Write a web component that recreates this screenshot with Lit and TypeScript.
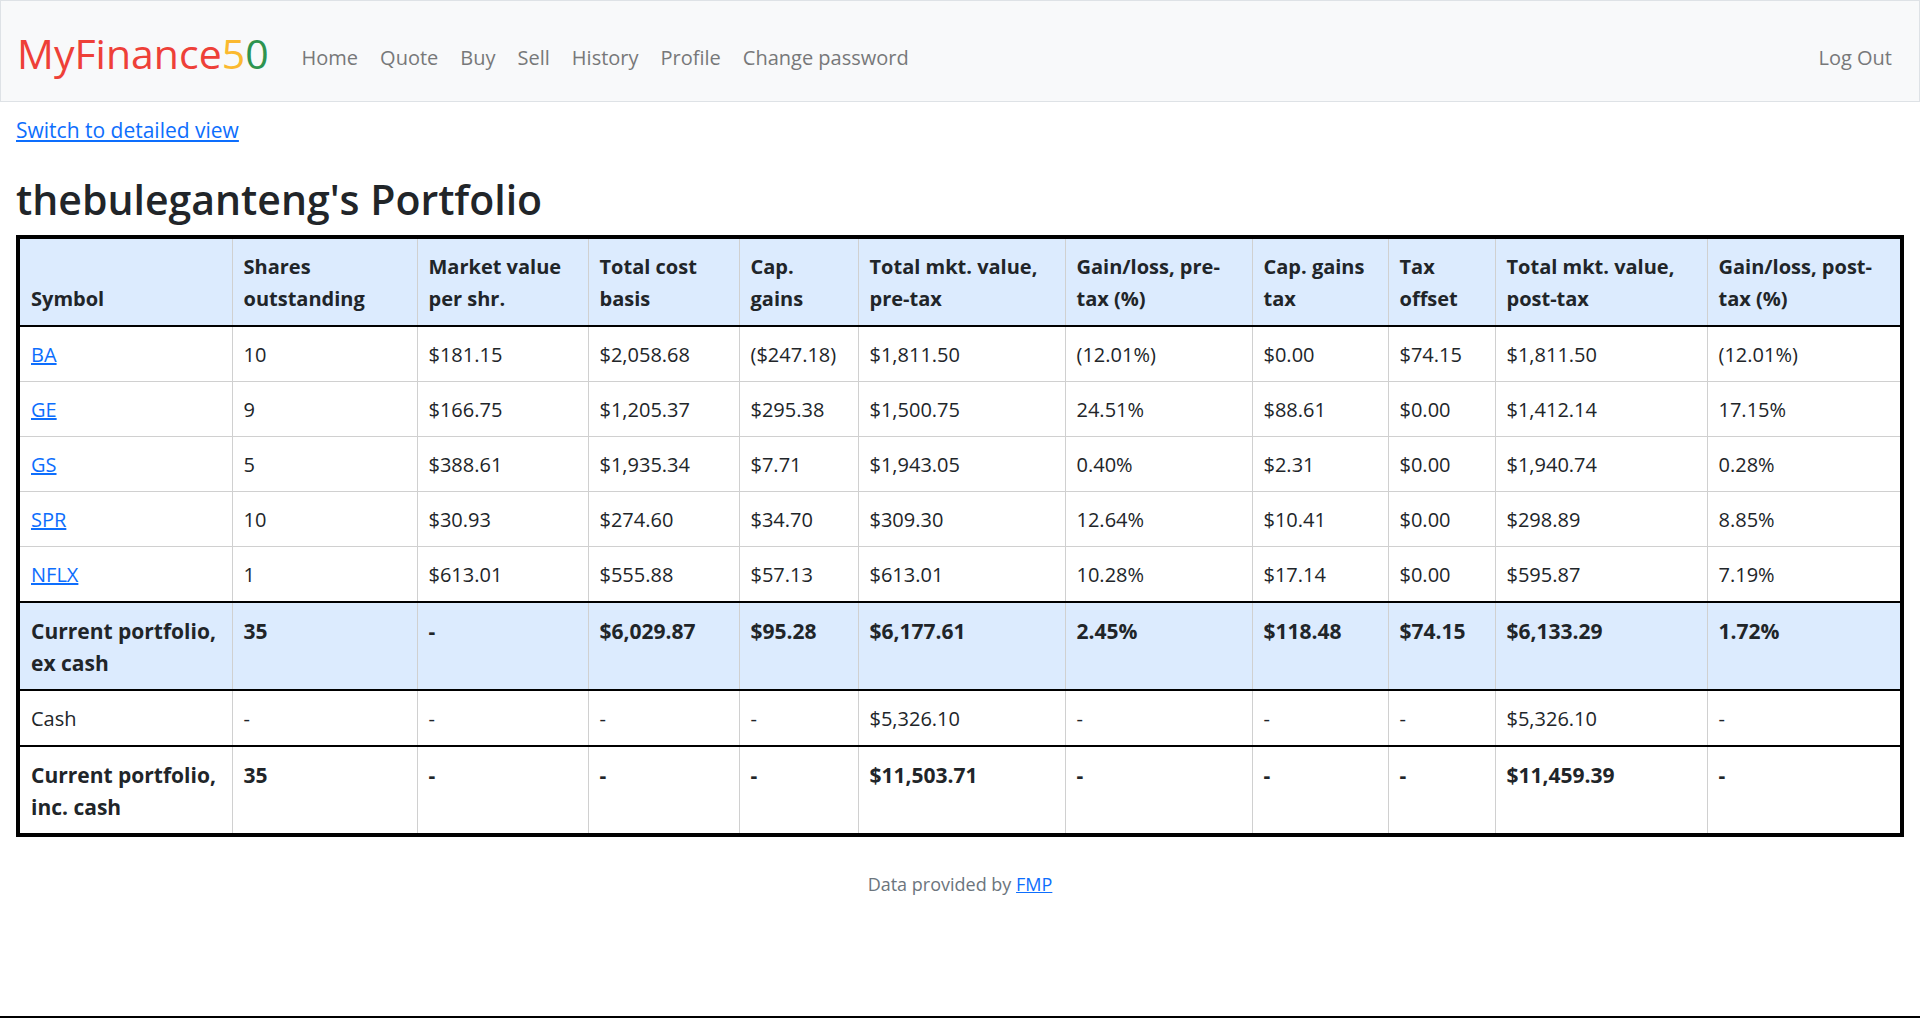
import { LitElement, html, css } from "lit";
import { customElement } from "lit/decorators.js";
import { classMap } from "lit/directives/class-map.js";

interface Row {
  kind: "holding" | "subtotal" | "cash" | "total";
  name: string;
  values: string[];
}

const NAV = ["Home", "Quote", "Buy", "Sell", "History", "Profile", "Change password"];

const COLUMNS = [
  { id: "symbol", label: "Symbol" },
  { id: "shares", label: "Shares outstanding" },
  { id: "price", label: "Market value per shr." },
  { id: "cost", label: "Total cost basis" },
  { id: "gains", label: "Cap. gains" },
  { id: "pre-value", label: "Total mkt. value, pre-tax" },
  { id: "pre-return", label: "Gain/loss, pre-tax (%)" },
  { id: "tax", label: "Cap. gains tax" },
  { id: "offset", label: "Tax offset" },
  { id: "post-value", label: "Total mkt. value, post-tax" },
  { id: "post-return", label: "Gain/loss, post-tax (%)" },
];

const ROWS: Row[] = [
  { kind: "holding", name: "BA", values: ["10", "$181.15", "$2,058.68", "($247.18)", "$1,811.50", "(12.01%)", "$0.00", "$74.15", "$1,811.50", "(12.01%)"] },
  { kind: "holding", name: "GE", values: ["9", "$166.75", "$1,205.37", "$295.38", "$1,500.75", "24.51%", "$88.61", "$0.00", "$1,412.14", "17.15%"] },
  { kind: "holding", name: "GS", values: ["5", "$388.61", "$1,935.34", "$7.71", "$1,943.05", "0.40%", "$2.31", "$0.00", "$1,940.74", "0.28%"] },
  { kind: "holding", name: "SPR", values: ["10", "$30.93", "$274.60", "$34.70", "$309.30", "12.64%", "$10.41", "$0.00", "$298.89", "8.85%"] },
  { kind: "holding", name: "NFLX", values: ["1", "$613.01", "$555.88", "$57.13", "$613.01", "10.28%", "$17.14", "$0.00", "$595.87", "7.19%"] },
  { kind: "subtotal", name: "Current portfolio, ex cash", values: ["35", "-", "$6,029.87", "$95.28", "$6,177.61", "2.45%", "$118.48", "$74.15", "$6,133.29", "1.72%"] },
  { kind: "cash", name: "Cash", values: ["-", "-", "-", "-", "$5,326.10", "-", "-", "-", "$5,326.10", "-"] },
  { kind: "total", name: "Current portfolio, inc. cash", values: ["35", "-", "-", "-", "$11,503.71", "-", "-", "-", "$11,459.39", "-"] },
];

@customElement("site-nav")
export class SiteNav extends LitElement {
  static styles = css`
    :host {
      display: block;
    }
    .bar {
      display: flex;
      align-items: center;
      padding: 14px 16px 8px;
      border: 1px solid #dee2e6;
      background: #f8f9fa;
    }
    .brand {
      margin-right: 22px;
      padding-bottom: 2px;
      font-size: 41px;
      line-height: 76px;
      text-decoration: none;
      white-space: nowrap;
    }
    .red {
      color: #ee4038;
    }
    .yellow {
      color: #fbb92f;
    }
    .green {
      color: #2e944f;
    }
    .links {
      display: flex;
      flex: 1;
      margin: 0;
      padding: 0;
      list-style: none;
    }
    .link {
      display: block;
      padding: 15px 11px 7px;
      color: #777879;
      text-decoration: none;
      white-space: nowrap;
    }
    .end {
      margin-left: auto;
    }
  `;

  render() {
    return html`
      <nav class="bar" aria-label="Main">
        <a class="brand" href="#"><span class="red">MyFinance</span><span class="yellow">5</span><span class="green">0</span></a>
        <ul class="links">
          ${NAV.map((label) => html`<li><a class="link" href="#">${label}</a></li>`)}
          <li class="end"><a class="link" href="#">Log Out</a></li>
        </ul>
      </nav>
    `;
  }
}

@customElement("portfolio-table")
export class PortfolioTable extends LitElement {
  static styles = css`
    :host {
      display: block;
    }
    .table {
      width: 100%;
      table-layout: fixed;
      border: 4px solid #000;
      border-collapse: collapse;
    }
    .symbol { width: 214px; }
    .shares { width: 185px; }
    .price { width: 171px; }
    .cost { width: 151px; }
    .gains { width: 119px; }
    .pre-value { width: 207px; }
    .pre-return { width: 187px; }
    .tax { width: 136px; }
    .offset { width: 107px; }
    .post-value { width: 212px; }
    .post-return { width: 195px; }
    .cell {
      padding: 12px 11px 10px;
      border: 1px solid #d0d0d0;
      font-weight: inherit;
      text-align: left;
      vertical-align: top;
    }
    .head .cell {
      vertical-align: bottom;
    }
    .head,
    .subtotal {
      background: #dcebfe;
    }
    .head,
    .subtotal,
    .total {
      font-weight: 700;
    }
    .subtotal,
    .total {
      font-size: 21px;
    }
    .head,
    .subtotal,
    .cash {
      border-bottom: 2px solid #000;
    }
    .subtotal {
      border-top: 2px solid #000;
    }
    .link {
      color: #0d6efd;
    }
  `;

  private row(row: Row) {
    return html`
      <tr class=${classMap({ [row.kind]: true })}>
        <th class="cell" scope="row">${row.kind === "holding" ? html`<a class="link" href="#">${row.name}</a>` : row.name}</th>
        ${row.values.map((value) => html`<td class="cell">${value}</td>`)}
      </tr>
    `;
  }

  render() {
    return html`
      <table class="table">
        <colgroup>
          ${COLUMNS.map((column) => html`<col class=${column.id} />`)}
        </colgroup>
        <thead>
          <tr class="head">
            ${COLUMNS.map((column) => html`<th class="cell" scope="col">${column.label}</th>`)}
          </tr>
        </thead>
        <tbody>
          ${ROWS.map((row) => this.row(row))}
        </tbody>
      </table>
    `;
  }
}

@customElement("app-root")
export class AppRoot extends LitElement {
  static styles = css`
    :host {
      display: flex;
      flex-direction: column;
      box-sizing: border-box;
      min-height: 100vh;
      border-bottom: 2px solid #000;
      background: #fff;
      color: #212529;
      font-family: "Segoe UI", "Open Sans", "Noto Sans", sans-serif;
      font-size: 20px;
      line-height: 32px;
    }
    .main {
      padding: 12px 16px 0;
    }
    .link {
      color: #0d6efd;
    }
    .switch {
      font-size: 21px;
    }
    .title {
      margin: 26px 0 10px;
      font-size: 41px;
      font-weight: 600;
      line-height: 52px;
    }
    .foot {
      padding: 31px 16px;
      color: #6c757d;
      font-size: 18px;
      text-align: center;
    }
  `;

  render() {
    return html`
      <site-nav></site-nav>
      <main class="main">
        <a class="link switch" href="#">Switch to detailed view</a>
        <h1 class="title">thebuleganteng's Portfolio</h1>
        <portfolio-table></portfolio-table>
      </main>
      <footer class="foot">Data provided by <a class="link" href="#">FMP</a></footer>
    `;
  }
}
